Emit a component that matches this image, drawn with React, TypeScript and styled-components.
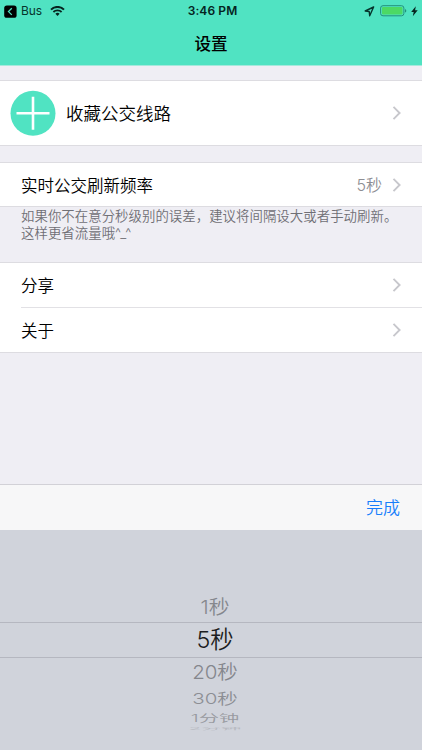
import React from "react";
import styled, { createGlobalStyle } from "styled-components";

const GlobalStyle = createGlobalStyle`
  * { box-sizing: border-box; }
  body {
    margin: 0;
    background: #efeef4;
    font-family: Inter, "Noto Sans CJK SC", sans-serif;
    color: #000;
  }
`;

const Screen = styled.div`
  display: flex;
  flex-direction: column;
  width: 422px;
  height: 750px;
  overflow: hidden;
  background: #efeef4;
`;

const Header = styled.header`
  flex: none;
  height: 66px;
  background: #50e3c2;
  border-bottom: 1px solid #a6e9dc;
`;

const StatusBar = styled.div`
  display: grid;
  grid-template-columns: 1fr auto 1fr;
  align-items: center;
  height: 22px;
  padding: 0 4px;
  font-size: 12px;
  line-height: 22px;
`;

const StatusGroup = styled.div<{ $end?: boolean }>`
  display: flex;
  align-items: center;
  justify-content: ${(p) => (p.$end ? "flex-end" : "flex-start")};
  height: 22px;
  svg { display: block; flex: none; }
`;

const AppName = styled.span`
  margin: 0 8px 0 4px;
  font-size: 12px;
  letter-spacing: -0.15px;
  color: #06352c;
`;

const Clock = styled.span`
  font-weight: 600;
  font-size: 12px;
  letter-spacing: 0.1px;
  padding-left: 3px;
  color: #05251f;
`;

const BatteryIcon = styled.svg`
  margin: 0 4px 0 5px;
`;

const Title = styled.h1`
  margin: 0;
  height: 43px;
  padding-top: 1px;
  font-size: 16.6px;
  font-weight: 500;
  line-height: 43px;
  text-align: center;
`;

const Group = styled.section<{ $gap: number }>`
  flex: none;
  margin-top: ${(p) => p.$gap}px;
  background: #fff;
  border: solid #dddce1;
  border-width: 1px 0;
`;

const Row = styled.div<{ $height: number; $left?: number }>`
  display: flex;
  align-items: center;
  height: ${(p) => p.$height}px;
  padding: 0 20px 0 ${(p) => p.$left ?? 21}px;
`;

const Divider = styled.div`
  height: 1px;
  margin-left: 21px;
  background: #e2e1e5;
`;

const Label = styled.span<{ $size?: number }>`
  flex: 1;
  padding-top: 2px;
  font-size: ${(p) => p.$size ?? 16.5}px;
  font-weight: 350;
  line-height: 24px;
`;

const Value = styled.span`
  margin-right: 10px;
  font-size: 16px;
  font-weight: 350;
  line-height: 24px;
  color: #8e8e93;
`;

const AddIcon = styled.svg`
  display: block;
  margin-right: 10px;
`;

const Note = styled.p`
  flex: none;
  height: 56px;
  margin: 0;
  padding: 1px 0 0 21px;
  font-size: 13.4px;
  font-weight: 350;
  letter-spacing: 0.05px;
  line-height: 16.5px;
  white-space: nowrap;
  color: #6f6f75;
`;

const Spacer = styled.div`
  flex: 1;
`;

const Toolbar = styled.div`
  display: flex;
  flex: none;
  align-items: center;
  justify-content: flex-end;
  height: 46px;
  padding-right: 22px;
  background: #f7f7f8;
  border-top: 1px solid #d2d1d7;
`;

const DoneButton = styled.button`
  padding: 1px 0 0;
  border: 0;
  background: none;
  font: inherit;
  font-size: 17px;
  font-weight: 350;
  line-height: 24px;
  color: #177ffb;
`;

const Picker = styled.div`
  display: flex;
  flex: none;
  flex-direction: column;
  height: 220px;
  padding-top: 64px;
  padding-left: 8px;
  background: #d0d3db;
  text-align: center;
`;

const Option = styled.div<{
  $height: number;
  $size: number;
  $scale?: number;
  $color: string;
}>`
  display: flex;
  flex: none;
  align-items: center;
  justify-content: center;
  height: ${(p) => p.$height}px;
  font-size: ${(p) => p.$size}px;
  font-weight: 350;
  line-height: 1.4;
  color: ${(p) => p.$color};
  span {
    display: block;
    white-space: nowrap;
    transform: scaleY(${(p) => p.$scale ?? 1});
  }
`;

const Selected = styled.div`
  flex: none;
  margin-left: -8px;
  padding-left: 8px;
  height: 36px;
  border: solid #b5b7c0;
  border-width: 1px 0;
`;

const FadedSlice = styled.div`
  height: 5px;
  overflow: hidden;
  opacity: 0.6;
`;

const Chevron = () => (
  <svg width="10" height="16" viewBox="0 0 10 16" fill="none">
    <path d="M1.5 1.9 7.6 8 1.5 14.1" stroke="#c7c7cc" strokeWidth="1.9" />
  </svg>
);

export default function App() {
  return (
    <Screen>
      <GlobalStyle />
      <Header>
        <StatusBar>
          <StatusGroup>
            <svg width="13" height="13" viewBox="0 0 13 13">
              <rect x="0.2" y="0.4" width="12.4" height="12.4" rx="2.6" fill="#000" />
              <path d="M7.8 3.3 4.5 6.6l3.3 3.3" fill="none" stroke="#50e3c2" strokeWidth="1.3" />
            </svg>
            <AppName>Bus</AppName>
            <svg width="15" height="11" viewBox="0 0 15 11" fill="none" stroke="#06251f">
              <path d="M1 3.6a9.2 9.2 0 0 1 13 0" strokeWidth="2" />
              <path d="M3.4 6a5.8 5.8 0 0 1 8.2 0" strokeWidth="1.8" />
              <path d="M5.4 7.8a3 3 0 0 1 4.2 0L7.5 10.1Z" fill="#06251f" stroke="none" />
            </svg>
          </StatusGroup>
          <Clock>3:46 PM</Clock>
          <StatusGroup $end>
            <svg width="11" height="11" viewBox="0 0 11 11">
              <path d="M9.6 1 1.2 5l4 .5.5 4.3Z" fill="none" stroke="#06352c" strokeWidth="1.4" strokeLinejoin="round" />
            </svg>
            <BatteryIcon width="27" height="12" viewBox="0 0 27 12">
              <rect x="0.6" y="0.7" width="23.3" height="10.1" rx="2.4" fill="none" stroke="#23907a" />
              <rect x="2" y="2" width="20.5" height="7.5" rx="1" fill="#4cd964" />
              <path d="M25 4q1.3.4 1.3 1.8T25 7.6Z" fill="#23907a" />
            </BatteryIcon>
            <svg width="7" height="11" viewBox="1 0 7 11">
              <path d="M5.8.3 1.2 6h2.5l-.9 4.2 4.9-5.9H5.1Z" fill="#06251f" />
            </svg>
          </StatusGroup>
        </StatusBar>
        <Title>设置</Title>
      </Header>

      <Group $gap={14}>
        <Row $height={64} $left={10}>
          <AddIcon width="46" height="46" viewBox="0 0 46 46">
            <circle cx="23" cy="23.3" r="22.5" fill="#50e3c2" />
            <path d="M6.5 23.3h33M23 6.8v33" stroke="#fff" strokeWidth="2.6" />
          </AddIcon>
          <Label $size={17.5}>收藏公交线路</Label>
          <Chevron />
        </Row>
      </Group>

      <Group $gap={16}>
        <Row $height={43}>
          <Label>实时公交刷新频率</Label>
          <Value>5秒</Value>
          <Chevron />
        </Row>
      </Group>
      <Note>
        如果你不在意分秒级别的误差，建议将间隔设大或者手动刷新。
        <br />
        这样更省流量哦^_^
      </Note>

      <Group $gap={-1}>
        <Row $height={44}>
          <Label>分享</Label>
          <Chevron />
        </Row>
        <Divider />
        <Row $height={44}>
          <Label>关于</Label>
          <Chevron />
        </Row>
      </Group>

      <Spacer />
      <Toolbar>
        <DoneButton>完成</DoneButton>
      </Toolbar>
      <Picker>
        <Option $height={28} $size={20.8} $color="#85878d" $scale={0.92}><span>1秒</span></Option>
        <Selected>
          <Option $height={34} $size={23.3} $color="#1c1d20"><span>5秒</span></Option>
        </Selected>
        <Option $height={28} $size={20.5} $color="#85878d" $scale={0.93}><span>20秒</span></Option>
        <Option $height={26} $size={20.5} $color="#8c8e94" $scale={0.72}><span>30秒</span></Option>
        <Option $height={14} $size={20.3} $color="#989aa0" $scale={0.48}><span>1分钟</span></Option>
        <FadedSlice>
          <Option $height={6} $size={20} $color="#a5a7ad" $scale={0.16}><span>2分钟</span></Option>
        </FadedSlice>
      </Picker>
    </Screen>
  );
}
